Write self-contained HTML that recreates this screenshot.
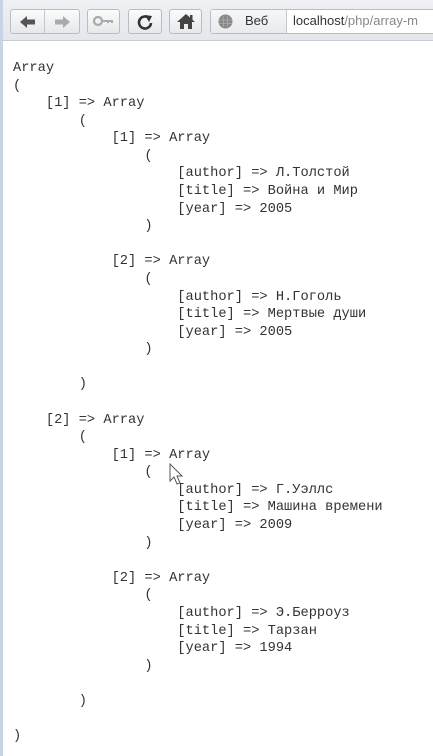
<!DOCTYPE html>
<html><head><meta charset="utf-8"><style>
body{margin:0;width:433px;height:756px;overflow:hidden;background:#fff;position:relative;font-family:"Liberation Sans",sans-serif}
.tb{position:absolute;left:0;top:0;width:433px;height:40px;background:linear-gradient(#eef0f4,#e4e7ec);border-bottom:1px solid #c9ccd2}
.edge{position:absolute;left:0;top:0;width:3px;height:756px;background:#c8d4e6}
.btn{position:absolute;top:9px;height:25px;border:1px solid #b9bcc2;border-radius:3px;background:linear-gradient(#fbfbfc,#e6e8eb);box-sizing:border-box}
.url{position:absolute;left:210px;top:9px;width:230px;height:25px;border:1px solid #b9bcc2;border-radius:3px;background:#fff;box-sizing:border-box}
.idn{position:absolute;left:0;top:0;width:75px;height:23px;background:linear-gradient(#f6f7f8,#e8eaed);border-right:1px solid #c5c8cd}
pre{position:absolute;left:13px;top:60px;margin:0;font-family:"Liberation Mono",monospace;font-size:13.7px;line-height:17.58px;color:#333}
</style></head><body>
<div class="tb"></div>
<div class="edge"></div>
<div class="btn" style="left:10px;width:70px"></div>
<div style="position:absolute;left:44px;top:10px;width:1px;height:23px;background:#c5c8cd"></div>
<svg style="position:absolute;left:18px;top:14px" width="20" height="16"><path d="M2 8 L9 2 V5.5 H17 V10.5 H9 V14 Z" fill="#555"/></svg>
<svg style="position:absolute;left:52px;top:14px" width="20" height="16"><path d="M18 8 L11 2 V5.5 H3 V10.5 H11 V14 Z" fill="#aaa"/></svg>
<div class="btn" style="left:87px;width:33px"></div>
<svg style="position:absolute;left:93px;top:15px" width="22" height="12"><circle cx="5" cy="6" r="4" fill="none" stroke="#aaa" stroke-width="2.2"/><path d="M9 5h11v3h-2v-1h-2v1h-2v-1h-5z" fill="#aaa"/></svg>
<div class="btn" style="left:128px;width:34px"></div>
<svg style="position:absolute;left:136px;top:13px" width="18" height="18"><path d="M13.5 5.5 A6 6 0 1 0 15 10" fill="none" stroke="#333" stroke-width="2.6"/><path d="M9 2 L16 3 L13 9 Z" fill="#333"/></svg>
<div class="btn" style="left:169px;width:33px"></div>
<svg style="position:absolute;left:176px;top:12px" width="20" height="18"><path d="M10 2 L19 10 H16 V17 H12 V12 H8 V17 H4 V10 H1 Z" fill="#444"/><rect x="14" y="3" width="2.5" height="5" fill="#444"/></svg>
<div class="url"><div class="idn"></div>
<svg style="position:absolute;left:7px;top:4px" width="15" height="15"><circle cx="7.5" cy="7.5" r="7" fill="#888"/><path d="M5.5 2v11M9.5 2v11M1 6h13M1 9.5h13" stroke="#aaa" stroke-width="0.8"/></svg>
<span style="position:absolute;left:34px;top:3px;font-size:13px;color:#333">Веб</span>
<span style="position:absolute;left:82px;top:3px;font-size:13px;color:#333;white-space:nowrap">localhost<span style="color:#888">/php/array-m</span></span>
</div>
<pre>Array
(
    [1] =&gt; Array
        (
            [1] =&gt; Array
                (
                    [author] =&gt; Л.Толстой
                    [title] =&gt; Война и Мир
                    [year] =&gt; 2005
                )

            [2] =&gt; Array
                (
                    [author] =&gt; Н.Гоголь
                    [title] =&gt; Мертвые души
                    [year] =&gt; 2005
                )

        )

    [2] =&gt; Array
        (
            [1] =&gt; Array
                (
                    [author] =&gt; Г.Уэллс
                    [title] =&gt; Машина времени
                    [year] =&gt; 2009
                )

            [2] =&gt; Array
                (
                    [author] =&gt; Э.Берроуз
                    [title] =&gt; Тарзан
                    [year] =&gt; 1994
                )

        )

)</pre>
<svg style="position:absolute;left:169px;top:463px" width="16" height="24"><path d="M1 1 V18 L5 14 L8 21 L11 20 L8 13 H13 Z" fill="#fff" stroke="#555" stroke-width="1"/></svg>
</body></html>
